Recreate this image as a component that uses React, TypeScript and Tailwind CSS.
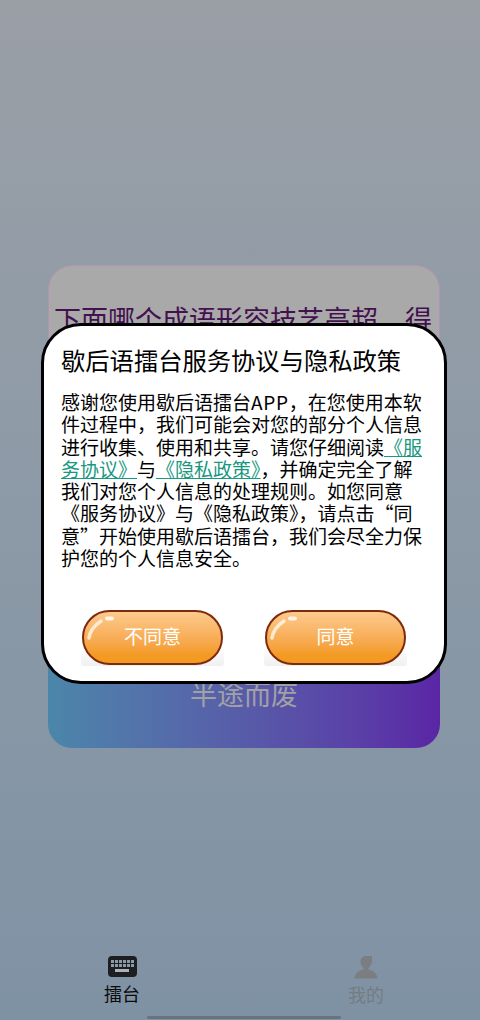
const font = "font-['Noto_Sans_CJK_SC','Liberation_Sans',sans-serif]"

const GlossyButton = ({ label }: { label: string }) => {
    return (
        <div className="w-[143px] h-[56px] bg-gradient-to-b from-white from-65% to-[#f0f0f0] rounded-b-[3px]">
            <button className="relative w-[141px] h-[55px] mx-[1px] pb-[4px] rounded-full border-2 border-[#7f2a0c] bg-gradient-to-b from-[#fdca8c] to-[#f39a22] to-85% text-white text-[19px] leading-[26px]">
                <svg className="absolute left-[2px] top-[3px]" width="36" height="30" viewBox="0 0 36 30" fill="none">
                    <path d="M3 23C4 16 9 10 15 6" stroke="#fff" strokeOpacity="0.7" strokeWidth="3.5" strokeLinecap="round" />
                    <path d="M21 3.5H26" stroke="#fff" strokeOpacity="0.8" strokeWidth="4" strokeLinecap="round" />
                </svg>
                {label}
            </button>
        </div>
    )
}

const KeyboardIcon = () => {
    const keys = Array.from({ length: 12 })
    return (
        <div className="w-[29px] h-[21px] rounded-[4px] bg-[#1c1e21] flex flex-col items-center pt-[4px] gap-[2px]">
            <div className="grid grid-cols-6 gap-[1px]">
                {keys.map((_, i) => (
                    <div key={i} className="w-[3px] h-[3px] bg-[#8c9aa8]" />
                ))}
            </div>
            <div className="w-[14px] h-[3px] bg-[#a9b4bf]" />
        </div>
    )
}

const PersonIcon = () => {
    return (
        <svg width="24" height="24" viewBox="0 0 24 24" fill="#7b7e80">
            <path d="M12 1C8.5 1 6.5 3.5 6.5 7C6.5 9.8 8 11.8 9.5 12.8V14.5C6 15.5 1 17 .5 23.5H23.5C23 17 18 15.5 14.5 14.5V12.8C16 11.8 18 9.6 18 6V1H12Z" />
        </svg>
    )
}

export default function App() {
    return (
        <div className={`relative w-[480px] h-[1020px] overflow-hidden flex flex-col bg-gradient-to-b from-[#9a9fa6] via-[#8f9ba7] via-40% to-[#7f92a4] ${font}`}>
            <div className="flex-1 pt-[265px] pl-[48px] pr-[40px]">
                <div className="h-[483px] rounded-[24px] overflow-hidden flex flex-col">
                    <div className="h-[350px] bg-[#a9a9a9] border border-[#b393ad] border-b-0 rounded-t-[24px] pt-[31px] pl-[5px] overflow-hidden">
                        <div className="text-[27px] leading-[44px] whitespace-nowrap text-[#43114f]">下面哪个成语形容技艺高超，得</div>
                    </div>
                    <div className="flex-1 bg-gradient-to-r from-[#4b86aa] to-[#5a25a5] flex justify-center pt-[61px]">
                        <span className="text-[27px] leading-[36px] text-[#a1a1a5]">半途而废</span>
                    </div>
                </div>
            </div>

            <div className="h-[68px] flex pl-[103px] pr-[95px] justify-between">
                <div className="flex flex-col items-center w-[38px] pt-[4px]">
                    <KeyboardIcon />
                    <span className="text-[18px] leading-[24px] mt-[4px] text-[#0b0b0b]">擂台</span>
                </div>
                <div className="flex flex-col items-center w-[38px] pt-[3px]">
                    <PersonIcon />
                    <span className="text-[18px] leading-[24px] mt-[3px] text-[#757c82]">我的</span>
                </div>
            </div>
            <div className="absolute left-[147px] bottom-[1px] w-[194px] h-[3px] rounded-full bg-[#68757f]" />

            <div className="absolute left-[41px] top-[323px] w-[406px] h-[361px] rounded-[40px] border-[3px] border-black bg-white pt-[17px] px-[17px]">
                <div className="text-[24.3px] leading-[34px] text-black whitespace-nowrap">歇后语擂台服务协议与隐私政策</div>
                <p className="mt-[14px] w-[362px] text-[19px] leading-[22.3px] text-black">
                    感谢您使用歇后语擂台<span className="tracking-[0.7px]">APP</span>，在您使用本软件过程中，我们可能会对您的部分个人信息进行收集、使用和共享。请您仔细阅读
                    <span className="text-[#18987f] underline">《服务协议》</span>
                    与
                    <span className="text-[#18987f] underline">《隐私政策》</span>
                    ，并确定完全了解我们对您个人信息的处理规则。如您同意《服务协议》与《隐私政策》，请点击“同意”开始使用歇后语擂台，我们会尽全力保护您的个人信息安全。
                </p>
                <div className="flex justify-between mt-[41px] ml-[20px] w-[326px]">
                    <GlossyButton label="不同意" />
                    <GlossyButton label="同意" />
                </div>
            </div>
        </div>
    )
}
